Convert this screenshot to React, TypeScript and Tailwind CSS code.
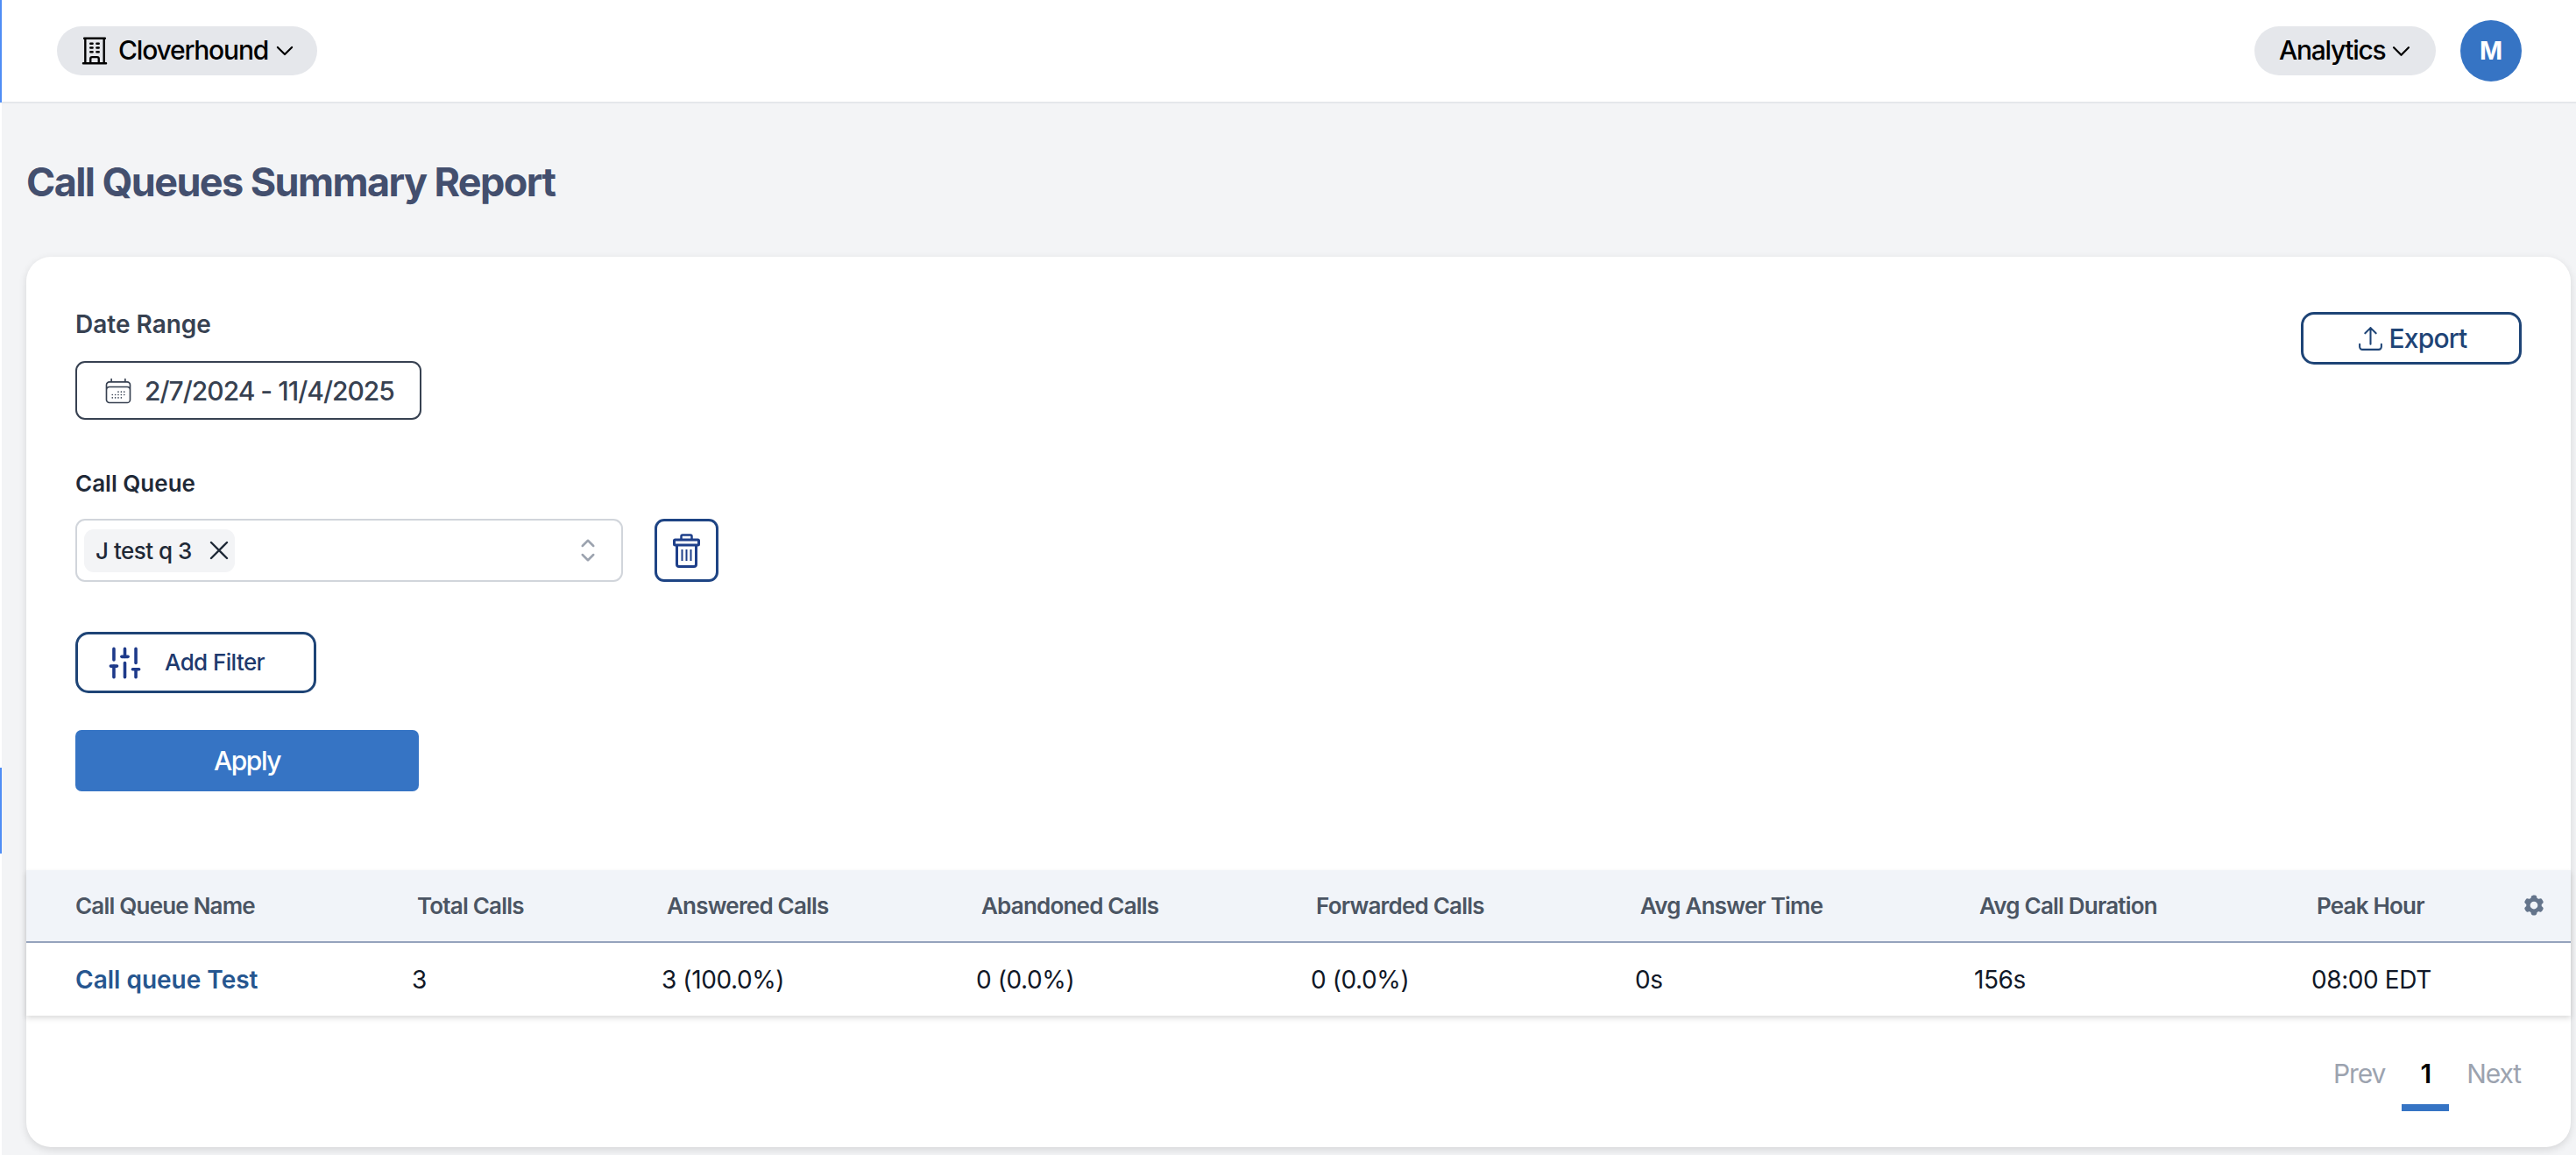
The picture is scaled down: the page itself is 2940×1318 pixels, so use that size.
import React from "react";
import { SlidersVertical } from "lucide-react";
import { HiCog6Tooth } from "react-icons/hi2";

const columns = [
  { title: "Call Queue Name", value: "Call queue Test", width: "w-[440px]" },
  { title: "Total Calls", value: "3", width: "w-[285px]" },
  { title: "Answered Calls", value: "3 (100.0%)", width: "w-[359px]" },
  { title: "Abandoned Calls", value: "0 (0.0%)", width: "w-[382px]" },
  { title: "Forwarded Calls", value: "0 (0.0%)", width: "w-[370px]" },
  { title: "Avg Answer Time", value: "0s", width: "w-[387px]" },
  { title: "Avg Call Duration", value: "156s", width: "w-[385px]" },
  { title: "Peak Hour", value: "08:00 EDT", width: "w-[296px]" },
];

const Outline = ({ d, size, width = 1.5, className }: { d: string; size: number; width?: number; className?: string }) => (
  <svg viewBox="0 0 24 24" width={size} height={size} fill="none" stroke="currentColor" strokeWidth={width} strokeLinecap="round" strokeLinejoin="round" className={className}>
    <path d={d} />
  </svg>
);

const chevronDown = "m19.5 8.25-7.5 7.5-7.5-7.5";
const building = "M3.75 21h16.5M4.5 3h15M5.25 3v18m13.5-18v18M9 6.75h1.5m-1.5 3h1.5m-1.5 3h1.5m3-6H15m-1.5 3H15m-1.5 3H15M9 21v-3.375c0-.621.504-1.125 1.125-1.125h3.75c.621 0 1.125.504 1.125 1.125V21";
const tray = "M3 16.5v2.25A2.25 2.25 0 0 0 5.25 21h13.5A2.25 2.25 0 0 0 21 18.75V16.5m-13.5-9L12 3m0 0 4.5 4.5M12 3v13.5";
const calendar = "M6.75 3v2.25M17.25 3v2.25M3 18.75V7.5a2.25 2.25 0 0 1 2.25-2.25h13.5A2.25 2.25 0 0 1 21 7.5v11.25m-18 0A2.25 2.25 0 0 0 5.25 21h13.5A2.25 2.25 0 0 0 21 18.75m-18 0v-7.5A2.25 2.25 0 0 1 5.25 9h13.5A2.25 2.25 0 0 1 21 11.25v7.5m-9-6h.008v.008H12v-.008ZM12 15h.008v.008H12V15Zm0 2.25h.008v.008H12v-.008ZM9.75 15h.008v.008H9.75V15Zm0 2.25h.008v.008H9.75v-.008ZM7.5 15h.008v.008H7.5V15Zm0 2.25h.008v.008H7.5v-.008Zm6.75-4.5h.008v.008h-.008v-.008Zm0 2.25h.008v.008h-.008V15Zm0 2.25h.008v.008h-.008v-.008Zm2.25-4.5h.008v.008H16.5v-.008Zm0 2.25h.008v.008H16.5V15Z";

const TrashIcon = () => (
  <svg viewBox="0 0 31 39" width={31} height={39} fill="none" stroke="currentColor" strokeWidth={3}>
    <path d="M9.5 7V3a1.5 1.5 0 0 1 1.5-1.5h9A1.5 1.5 0 0 1 21.5 3v4" strokeWidth={2.5} />
    <rect x={1.5} y={7} width={28} height={6} rx={1} />
    <path d="M4.5 13v22a2.5 2.5 0 0 0 2.5 2.5h17a2.5 2.5 0 0 0 2.5-2.5V13" />
    <path d="M10.5 18v13M15.5 18v13M20.5 18v13" strokeWidth={2} />
  </svg>
);

export default function App() {
  return (
    <div className="flex h-screen overflow-hidden bg-[#f3f4f6] text-[30px] font-['Inter',sans-serif]">
      {/* Sidebar rail */}
      <div className="flex w-[2px] shrink-0 flex-col bg-white">
        <div className="h-[117px] bg-[#4f8df5]" />
        <div className="mt-[759px] h-[98px] bg-[#4f8df5]" />
      </div>

      <div className="flex min-w-0 flex-1 flex-col">
        {/* Top bar */}
        <header className="flex h-[118px] shrink-0 items-center justify-between border-b-2 border-[#e5e7eb] bg-white pl-[63px] pr-[62px]">
          <button className="flex h-[56px] w-[297px] items-center rounded-full bg-[#e5e7eb] pl-[24px] font-medium tracking-[-1.2px] text-black">
            <Outline d={building} size={38} className="shrink-0" />
            <span className="-mt-[2px] ml-[8px] leading-none">Cloverhound</span>
            <Outline d={chevronDown} size={26} width={2} className="ml-[6px] shrink-0" />
          </button>
          <div className="flex items-center gap-[28px]">
            <button className="flex h-[56px] w-[207px] items-center rounded-full bg-[#e5e7eb] pl-[28px] font-medium tracking-[-1.3px] text-black">
              <span className="-mt-[2px] leading-none">Analytics</span>
              <Outline d={chevronDown} size={27} width={2} className="ml-[5px] shrink-0" />
            </button>
            <div className="flex h-[70px] w-[70px] items-center justify-center rounded-full bg-[#3674c4] text-[28px] font-bold text-white">M</div>
          </div>
        </header>

        {/* Page */}
        <main className="flex flex-1 flex-col pl-[28px] pr-[6px]">
          <h1 className="flex h-[175px] shrink-0 items-center pt-[4px] text-[45px] font-bold leading-none tracking-[-1.6px] text-[#434f6e]">Call Queues Summary Report</h1>

          <section className="flex h-[1016px] flex-col rounded-[28px] bg-white shadow-[0_3px_10px_rgba(0,0,0,0.12)]">
            <div className="flex h-[700px] shrink-0 justify-between pl-[56px] pr-[56px] pt-[60px]">
              <div className="flex flex-col items-start">
                <label className="text-[28px] font-semibold leading-[34px] text-[#374151]">Date Range</label>
                <button className="mt-[25px] flex h-[67px] w-[395px] items-center rounded-[11px] border-2 border-[#374151] pl-[29px] font-medium tracking-[-1px] text-[#374151]">
                  <Outline d={calendar} size={36} width={1.1} className="shrink-0" />
                  <span className="ml-[12px] leading-none">2/7/2024 - 11/4/2025</span>
                </button>

                <label className="mt-[56px] text-[26px] font-semibold leading-[34px] text-[#1f2937]">Call Queue</label>
                <div className="mt-[23px] flex items-center gap-[36px]">
                  <div className="flex h-[72px] w-[625px] items-center rounded-[11px] border-2 border-[#d1d5db] pl-[8px] pr-[18px]">
                    <span className="flex h-[49px] items-center rounded-[11px] bg-[#f3f4f6] pl-[13px] text-[26px] font-medium tracking-[-0.5px] text-[#1f2937]">
                      J test q 3
                      <Outline d="M6 18 18 6M6 6l12 12" size={36} width={1.6} className="ml-[13px] shrink-0" />
                    </span>
                    <Outline d="M8.25 15 12 18.75 15.75 15m-7.5-6L12 5.25 15.75 9" size={40} className="ml-auto shrink-0 text-[#9ca3af]" />
                  </div>
                  <button className="flex h-[72px] w-[73px] items-center justify-center rounded-[11px] border-[3px] border-[#1e4484] text-[#1e3f8a]">
                    <TrashIcon />
                  </button>
                </div>

                <button className="mt-[57px] flex h-[70px] w-[275px] items-center rounded-[15px] border-[3.5px] border-[#1e4476] pl-[32px] text-[26px] font-medium tracking-[-0.6px] text-[#1e3a6e]">
                  <SlidersVertical size={43} strokeWidth={2} className="shrink-0 text-[#1e3a8a]" />
                  <span className="ml-[24px] leading-none">Add Filter</span>
                </button>

                <button className="mt-[42px] flex h-[70px] w-[392px] items-center justify-center rounded-[7px] bg-[#3674c4] font-medium tracking-[-1.5px] text-white">Apply</button>
              </div>

              <button className="mt-[3px] flex h-[60px] w-[252px] items-center justify-center gap-[5px] rounded-[15px] border-[3px] border-[#1e4476] font-medium tracking-[-0.8px] text-[#1e4476]">
                <Outline d={tray} size={33} />
                Export
              </button>
            </div>

            {/* Table */}
            <div className="shadow-[0_3px_6px_rgba(0,0,0,0.14)]">
              <table className="w-full table-fixed border-collapse">
                <thead>
                  <tr className="h-[82px] border-b-2 border-[#95a3bd] bg-[#f1f4f9]">
                    {columns.map((c, i) => (
                      <th key={c.title} className={`${c.width} relative text-left text-[26px] font-semibold tracking-[-0.8px] text-[#4b5563] ${i === 0 ? "pl-[56px]" : "pl-[6px]"}`}>
                        {c.title}
                        {i === 7 && <HiCog6Tooth size={28} className="absolute right-[28px] top-[26px] text-[#64748b]" />}
                      </th>
                    ))}
                  </tr>
                </thead>
                <tbody>
                  <tr className="h-[84px]">
                    {columns.map((c, i) => (
                      <td key={c.title} className={i === 0 ? "pl-[56px] text-[28px] font-semibold text-[#26568f]" : "text-[28px] tracking-[-0.4px] text-[#111827]"}>
                        {c.value}
                      </td>
                    ))}
                  </tr>
                </tbody>
              </table>
            </div>

            {/* Pagination */}
            <div className="flex justify-end pr-[57px] pt-[46px] tracking-[-1.1px]">
              <span className="mr-[19px] leading-[40px] text-[#9ca3af]">Prev</span>
              <div className="flex w-[54px] flex-col items-center">
                <span className="font-semibold leading-[40px] text-black">1</span>
                <span className="mt-[15px] h-[8px] w-full bg-[#3674c4]" />
              </div>
              <span className="ml-[20px] leading-[40px] text-[#9ca3af]">Next</span>
            </div>
          </section>
        </main>
      </div>
    </div>
  );
}
